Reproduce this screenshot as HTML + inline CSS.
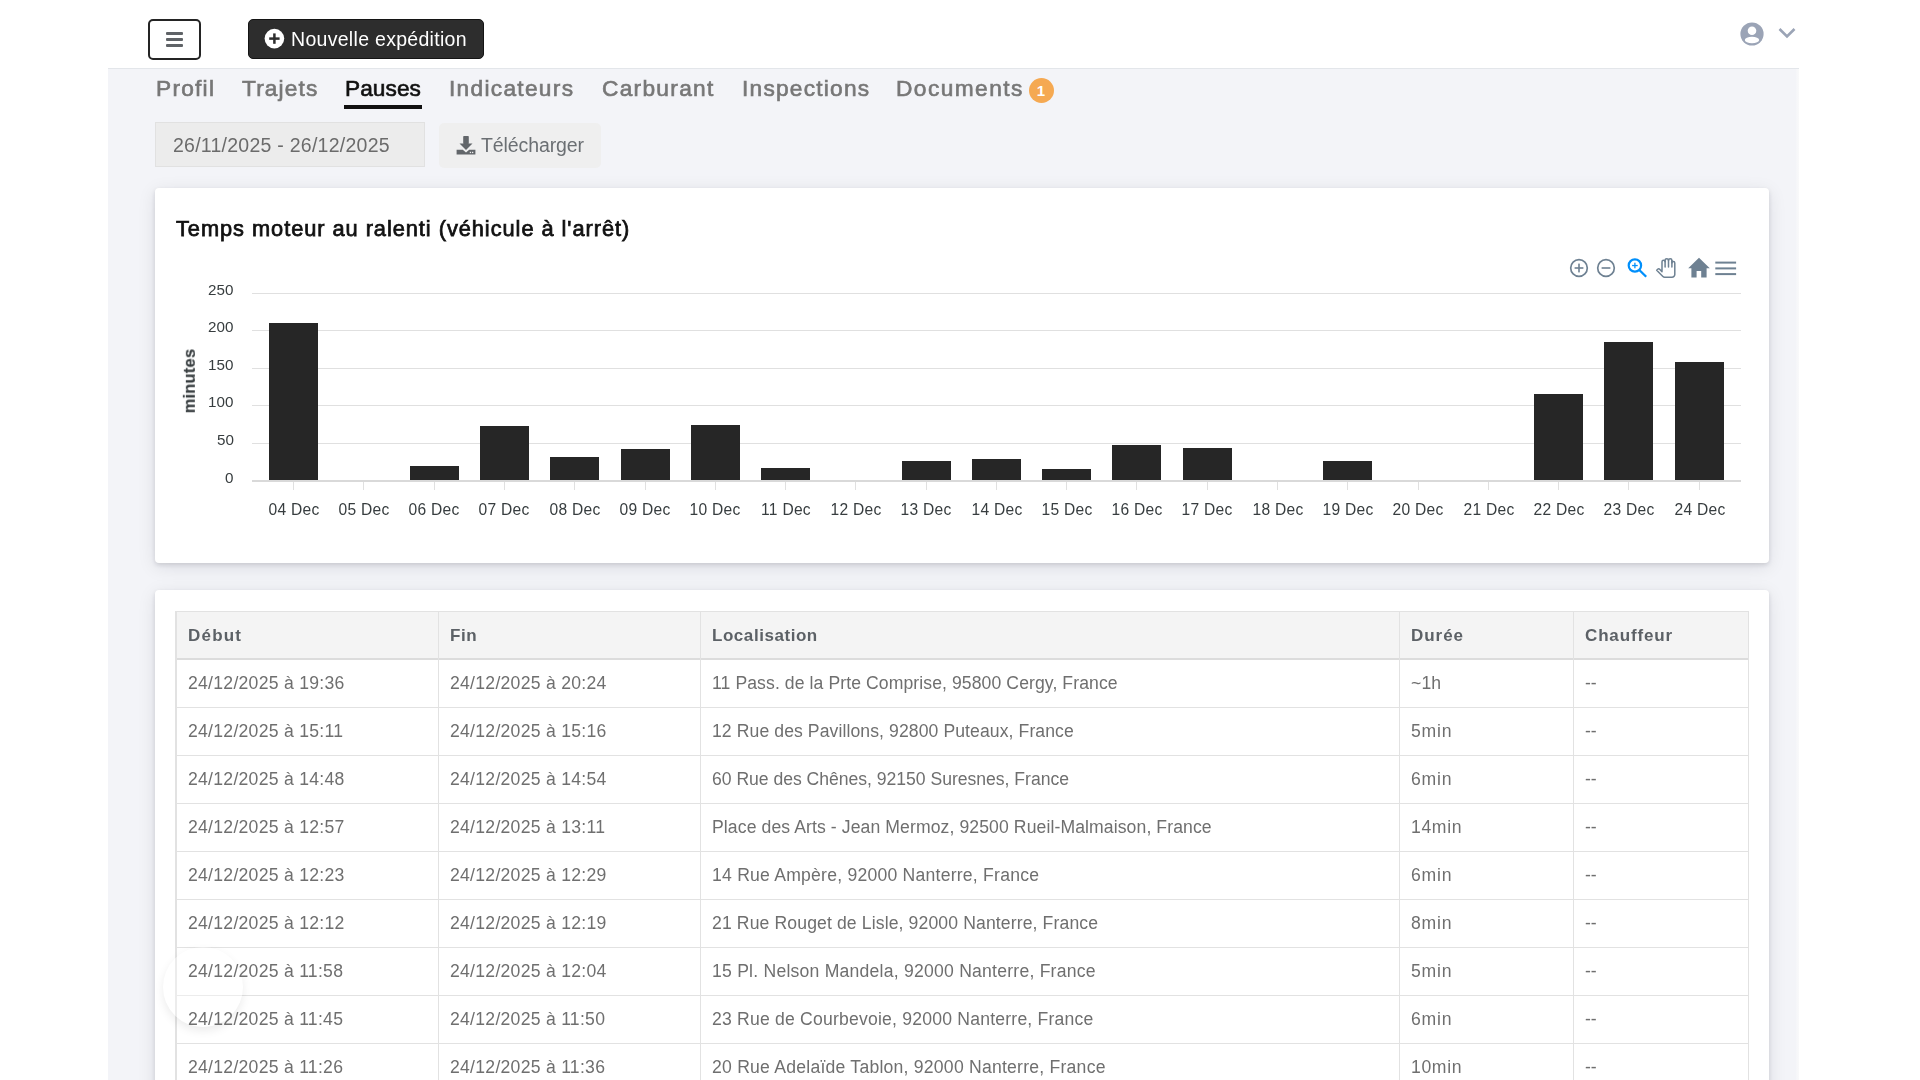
<!DOCTYPE html>
<html><head><meta charset="utf-8"><title>Pauses</title>
<style>
html,body{margin:0;padding:0;}
body{width:1920px;height:1080px;overflow:hidden;background:#fff;position:relative;font-family:'Liberation Sans', sans-serif;}
.r{position:absolute;}
.t{position:absolute;white-space:nowrap;will-change:transform;}
</style></head><body>
<div class="r" style="left:108.00px;top:68.00px;width:1688.00px;height:1012.00px;background:#f3f4f8;"></div>
<div class="r" style="left:108.00px;top:67.60px;width:1691.00px;height:1.20px;background:#e3e6ea;"></div>
<div class="r" style="left:1796.00px;top:69.00px;width:3.00px;height:1011.00px;background:linear-gradient(90deg,#f5f6f9,#f9f9fa);"></div>
<div class="r" style="left:148.00px;top:18.50px;width:53.00px;height:41.00px;border:2px solid #242424;border-radius:5px;box-sizing:border-box;background:#fff;"></div>
<div class="r" style="left:166.00px;top:32.35px;width:17.00px;height:2.50px;background:#5f6367;border-radius:1px;"></div>
<div class="r" style="left:166.00px;top:38.15px;width:17.00px;height:2.50px;background:#5f6367;border-radius:1px;"></div>
<div class="r" style="left:166.00px;top:44.05px;width:17.00px;height:2.50px;background:#5f6367;border-radius:1px;"></div>
<div class="r" style="left:248.00px;top:19.00px;width:236.00px;height:39.60px;background:#2d2d2d;border:1px solid #141414;box-sizing:border-box;border-radius:5px;"></div>
<svg class="r" style="left:264px;top:28px" width="21" height="21" viewBox="0 0 21 21"><circle cx="10.4" cy="10.6" r="9.8" fill="#fff"/><rect x="5.2" y="9.35" width="10.4" height="2.5" fill="#2d2d2d"/><rect x="9.15" y="5.4" width="2.5" height="10.4" fill="#2d2d2d"/></svg>
<div class="t" style="left:290.50px;top:30.19px;font-size:19.5px;line-height:19.5px;color:#fff;font-weight:normal;letter-spacing:0.3px;">Nouvelle expédition</div>
<svg class="r" style="left:1740px;top:21.5px" width="24" height="24" viewBox="0 0 24 24"><defs><clipPath id="uc"><circle cx="12" cy="12" r="11.6"/></clipPath></defs><circle cx="12" cy="12" r="11.6" fill="#9ba4b6"/><circle cx="12" cy="8.8" r="4.3" fill="#fff"/><ellipse cx="12" cy="18" rx="7.2" ry="3.2" fill="#fff" clip-path="url(#uc)"/></svg>
<svg class="r" style="left:1777px;top:26px" width="20" height="14" viewBox="0 0 20 14"><polyline points="2.5,3 10,10.5 17.5,3" fill="none" stroke="#9ba4b6" stroke-width="2.6"/></svg>
<div class="t" style="left:156.20px;top:77.08px;font-size:22.7px;line-height:22.7px;color:#777;font-weight:normal;letter-spacing:1.25px;-webkit-text-stroke:0.65px #777;">Profil</div>
<div class="t" style="left:241.50px;top:77.08px;font-size:22.7px;line-height:22.7px;color:#777;font-weight:normal;letter-spacing:1.13px;-webkit-text-stroke:0.65px #777;">Trajets</div>
<div class="t" style="left:345.30px;top:77.08px;font-size:22.7px;line-height:22.7px;color:#111;font-weight:normal;letter-spacing:0.05px;-webkit-text-stroke:0.65px #111;">Pauses</div>
<div class="t" style="left:448.80px;top:77.08px;font-size:22.7px;line-height:22.7px;color:#777;font-weight:normal;letter-spacing:1.3px;-webkit-text-stroke:0.65px #777;">Indicateurs</div>
<div class="t" style="left:602.10px;top:77.08px;font-size:22.7px;line-height:22.7px;color:#777;font-weight:normal;letter-spacing:1.3px;-webkit-text-stroke:0.65px #777;">Carburant</div>
<div class="t" style="left:741.70px;top:77.08px;font-size:22.7px;line-height:22.7px;color:#777;font-weight:normal;letter-spacing:1.24px;-webkit-text-stroke:0.65px #777;">Inspections</div>
<div class="t" style="left:895.80px;top:77.08px;font-size:22.7px;line-height:22.7px;color:#777;font-weight:normal;letter-spacing:1.45px;-webkit-text-stroke:0.65px #777;">Documents</div>
<div class="r" style="left:344.00px;top:104.80px;width:78.20px;height:3.90px;background:#111;"></div>
<div class="r" style="left:1028.5px;top:77.9px;width:25px;height:25px;border-radius:50%;background:#f5a952;color:#fff;font-size:15px;font-weight:bold;line-height:25px;text-align:center;">1</div>
<div class="r" style="left:155.00px;top:122.00px;width:270.00px;height:45.30px;background:#ececec;border:1px solid #e1e1e1;box-sizing:border-box;"></div>
<div class="t" style="left:173.00px;top:135.99px;font-size:19.5px;line-height:19.5px;color:#6b6b6b;font-weight:normal;letter-spacing:0.25px;">26/11/2025 - 26/12/2025</div>
<div class="r" style="left:439.40px;top:122.50px;width:161.60px;height:45.00px;background:#efefef;border-radius:5px;"></div>
<svg class="r" style="left:456px;top:136px" width="20" height="19" viewBox="0 0 20 19"><rect x="7.2" y="0" width="5.6" height="8" rx="0.8" fill="#62666a"/><polygon points="3.5,7.5 16.5,7.5 10,14" fill="#62666a"/><path d="M0.6 13.8 H6.8 L10 16.5 L13.2 13.8 H19.4 V18.4 H0.6 Z" fill="#62666a"/><rect x="13.8" y="15.8" width="1.3" height="1.3" fill="#efefef"/><rect x="16" y="15.8" width="1.3" height="1.3" fill="#efefef"/></svg>
<div class="t" style="left:480.80px;top:136.49px;font-size:19.5px;line-height:19.5px;color:#6b6f73;font-weight:normal;letter-spacing:-0.1px;">Télécharger</div>
<div class="r" style="left:155.00px;top:188.00px;width:1614.00px;height:375.00px;background:#fff;border-radius:4px;box-shadow:0 2px 4px rgba(20,22,40,0.13), 0 4px 18px rgba(20,22,40,0.10);"></div>
<div class="t" style="left:175.50px;top:217.75px;font-size:21.8px;line-height:21.8px;color:#111;font-weight:normal;letter-spacing:0.95px;-webkit-text-stroke:0.75px #111;">Temps moteur au ralenti (véhicule à l'arrêt)</div>
<div class="r" style="left:252.00px;top:292.60px;width:1489.00px;height:1.20px;background:#e0e0e0;"></div>
<div class="r" style="left:252.00px;top:330.10px;width:1489.00px;height:1.20px;background:#e0e0e0;"></div>
<div class="r" style="left:252.00px;top:367.50px;width:1489.00px;height:1.20px;background:#e0e0e0;"></div>
<div class="r" style="left:252.00px;top:404.80px;width:1489.00px;height:1.20px;background:#e0e0e0;"></div>
<div class="r" style="left:252.00px;top:442.60px;width:1489.00px;height:1.20px;background:#e0e0e0;"></div>
<div class="r" style="left:252.00px;top:480.20px;width:1489.00px;height:1.80px;background:#d9d9d9;"></div>
<div class="t" style="right:1686.50px;top:281.93px;font-size:15.2px;line-height:15.2px;color:#373d3f;font-weight:normal;letter-spacing:0px;">250</div>
<div class="t" style="right:1686.50px;top:319.43px;font-size:15.2px;line-height:15.2px;color:#373d3f;font-weight:normal;letter-spacing:0px;">200</div>
<div class="t" style="right:1686.50px;top:356.83px;font-size:15.2px;line-height:15.2px;color:#373d3f;font-weight:normal;letter-spacing:0px;">150</div>
<div class="t" style="right:1686.50px;top:394.13px;font-size:15.2px;line-height:15.2px;color:#373d3f;font-weight:normal;letter-spacing:0px;">100</div>
<div class="t" style="right:1686.50px;top:431.93px;font-size:15.2px;line-height:15.2px;color:#373d3f;font-weight:normal;letter-spacing:0px;">50</div>
<div class="t" style="right:1686.50px;top:469.83px;font-size:15.2px;line-height:15.2px;color:#373d3f;font-weight:normal;letter-spacing:0px;">0</div>
<div class="t" style="left:188.5px;top:381px;transform:translate(-50%,-50%) rotate(-90deg);font-size:16.3px;line-height:16.3px;font-weight:bold;color:#373d3f;letter-spacing:0.3px;-webkit-text-stroke:0.2px #373d3f">minutes</div>
<div class="r" style="left:293.10px;top:482.20px;width:1.00px;height:7.60px;background:#e0e0e0;"></div>
<div class="r" style="left:269.10px;top:323.20px;width:49.00px;height:157.20px;background:#262626;"></div>
<div class="t" style="left:193.60px;width:200px;text-align:center;top:502.19px;font-size:15.6px;line-height:15.6px;color:#373d3f;font-weight:normal;letter-spacing:0.25px;">04 Dec</div>
<div class="r" style="left:363.38px;top:482.20px;width:1.00px;height:7.60px;background:#e0e0e0;"></div>
<div class="t" style="left:263.89px;width:200px;text-align:center;top:502.19px;font-size:15.6px;line-height:15.6px;color:#373d3f;font-weight:normal;letter-spacing:0.25px;">05 Dec</div>
<div class="r" style="left:433.66px;top:482.20px;width:1.00px;height:7.60px;background:#e0e0e0;"></div>
<div class="r" style="left:409.66px;top:465.60px;width:49.00px;height:14.80px;background:#262626;"></div>
<div class="t" style="left:334.19px;width:200px;text-align:center;top:502.19px;font-size:15.6px;line-height:15.6px;color:#373d3f;font-weight:normal;letter-spacing:0.25px;">06 Dec</div>
<div class="r" style="left:503.94px;top:482.20px;width:1.00px;height:7.60px;background:#e0e0e0;"></div>
<div class="r" style="left:479.94px;top:425.90px;width:49.00px;height:54.50px;background:#262626;"></div>
<div class="t" style="left:404.49px;width:200px;text-align:center;top:502.19px;font-size:15.6px;line-height:15.6px;color:#373d3f;font-weight:normal;letter-spacing:0.25px;">07 Dec</div>
<div class="r" style="left:574.22px;top:482.20px;width:1.00px;height:7.60px;background:#e0e0e0;"></div>
<div class="r" style="left:550.22px;top:456.60px;width:49.00px;height:23.80px;background:#262626;"></div>
<div class="t" style="left:474.78px;width:200px;text-align:center;top:502.19px;font-size:15.6px;line-height:15.6px;color:#373d3f;font-weight:normal;letter-spacing:0.25px;">08 Dec</div>
<div class="r" style="left:644.50px;top:482.20px;width:1.00px;height:7.60px;background:#e0e0e0;"></div>
<div class="r" style="left:620.50px;top:449.10px;width:49.00px;height:31.30px;background:#262626;"></div>
<div class="t" style="left:545.08px;width:200px;text-align:center;top:502.19px;font-size:15.6px;line-height:15.6px;color:#373d3f;font-weight:normal;letter-spacing:0.25px;">09 Dec</div>
<div class="r" style="left:714.78px;top:482.20px;width:1.00px;height:7.60px;background:#e0e0e0;"></div>
<div class="r" style="left:690.78px;top:425.00px;width:49.00px;height:55.40px;background:#262626;"></div>
<div class="t" style="left:615.37px;width:200px;text-align:center;top:502.19px;font-size:15.6px;line-height:15.6px;color:#373d3f;font-weight:normal;letter-spacing:0.25px;">10 Dec</div>
<div class="r" style="left:785.06px;top:482.20px;width:1.00px;height:7.60px;background:#e0e0e0;"></div>
<div class="r" style="left:761.06px;top:468.40px;width:49.00px;height:12.00px;background:#262626;"></div>
<div class="t" style="left:685.67px;width:200px;text-align:center;top:502.19px;font-size:15.6px;line-height:15.6px;color:#373d3f;font-weight:normal;letter-spacing:0.25px;">11 Dec</div>
<div class="r" style="left:855.34px;top:482.20px;width:1.00px;height:7.60px;background:#e0e0e0;"></div>
<div class="t" style="left:755.96px;width:200px;text-align:center;top:502.19px;font-size:15.6px;line-height:15.6px;color:#373d3f;font-weight:normal;letter-spacing:0.25px;">12 Dec</div>
<div class="r" style="left:925.62px;top:482.20px;width:1.00px;height:7.60px;background:#e0e0e0;"></div>
<div class="r" style="left:901.62px;top:461.25px;width:49.00px;height:19.15px;background:#262626;"></div>
<div class="t" style="left:826.25px;width:200px;text-align:center;top:502.19px;font-size:15.6px;line-height:15.6px;color:#373d3f;font-weight:normal;letter-spacing:0.25px;">13 Dec</div>
<div class="r" style="left:995.90px;top:482.20px;width:1.00px;height:7.60px;background:#e0e0e0;"></div>
<div class="r" style="left:971.90px;top:458.75px;width:49.00px;height:21.65px;background:#262626;"></div>
<div class="t" style="left:896.55px;width:200px;text-align:center;top:502.19px;font-size:15.6px;line-height:15.6px;color:#373d3f;font-weight:normal;letter-spacing:0.25px;">14 Dec</div>
<div class="r" style="left:1066.18px;top:482.20px;width:1.00px;height:7.60px;background:#e0e0e0;"></div>
<div class="r" style="left:1042.18px;top:469.40px;width:49.00px;height:11.00px;background:#262626;"></div>
<div class="t" style="left:966.85px;width:200px;text-align:center;top:502.19px;font-size:15.6px;line-height:15.6px;color:#373d3f;font-weight:normal;letter-spacing:0.25px;">15 Dec</div>
<div class="r" style="left:1136.46px;top:482.20px;width:1.00px;height:7.60px;background:#e0e0e0;"></div>
<div class="r" style="left:1112.46px;top:445.30px;width:49.00px;height:35.10px;background:#262626;"></div>
<div class="t" style="left:1037.14px;width:200px;text-align:center;top:502.19px;font-size:15.6px;line-height:15.6px;color:#373d3f;font-weight:normal;letter-spacing:0.25px;">16 Dec</div>
<div class="r" style="left:1206.74px;top:482.20px;width:1.00px;height:7.60px;background:#e0e0e0;"></div>
<div class="r" style="left:1182.74px;top:447.50px;width:49.00px;height:32.90px;background:#262626;"></div>
<div class="t" style="left:1107.43px;width:200px;text-align:center;top:502.19px;font-size:15.6px;line-height:15.6px;color:#373d3f;font-weight:normal;letter-spacing:0.25px;">17 Dec</div>
<div class="r" style="left:1277.02px;top:482.20px;width:1.00px;height:7.60px;background:#e0e0e0;"></div>
<div class="t" style="left:1177.73px;width:200px;text-align:center;top:502.19px;font-size:15.6px;line-height:15.6px;color:#373d3f;font-weight:normal;letter-spacing:0.25px;">18 Dec</div>
<div class="r" style="left:1347.30px;top:482.20px;width:1.00px;height:7.60px;background:#e0e0e0;"></div>
<div class="r" style="left:1323.30px;top:461.25px;width:49.00px;height:19.15px;background:#262626;"></div>
<div class="t" style="left:1248.03px;width:200px;text-align:center;top:502.19px;font-size:15.6px;line-height:15.6px;color:#373d3f;font-weight:normal;letter-spacing:0.25px;">19 Dec</div>
<div class="r" style="left:1417.58px;top:482.20px;width:1.00px;height:7.60px;background:#e0e0e0;"></div>
<div class="t" style="left:1318.32px;width:200px;text-align:center;top:502.19px;font-size:15.6px;line-height:15.6px;color:#373d3f;font-weight:normal;letter-spacing:0.25px;">20 Dec</div>
<div class="r" style="left:1487.86px;top:482.20px;width:1.00px;height:7.60px;background:#e0e0e0;"></div>
<div class="t" style="left:1388.62px;width:200px;text-align:center;top:502.19px;font-size:15.6px;line-height:15.6px;color:#373d3f;font-weight:normal;letter-spacing:0.25px;">21 Dec</div>
<div class="r" style="left:1558.14px;top:482.20px;width:1.00px;height:7.60px;background:#e0e0e0;"></div>
<div class="r" style="left:1534.14px;top:394.00px;width:49.00px;height:86.40px;background:#262626;"></div>
<div class="t" style="left:1458.91px;width:200px;text-align:center;top:502.19px;font-size:15.6px;line-height:15.6px;color:#373d3f;font-weight:normal;letter-spacing:0.25px;">22 Dec</div>
<div class="r" style="left:1628.42px;top:482.20px;width:1.00px;height:7.60px;background:#e0e0e0;"></div>
<div class="r" style="left:1604.42px;top:342.10px;width:49.00px;height:138.30px;background:#262626;"></div>
<div class="t" style="left:1529.21px;width:200px;text-align:center;top:502.19px;font-size:15.6px;line-height:15.6px;color:#373d3f;font-weight:normal;letter-spacing:0.25px;">23 Dec</div>
<div class="r" style="left:1698.70px;top:482.20px;width:1.00px;height:7.60px;background:#e0e0e0;"></div>
<div class="r" style="left:1674.70px;top:361.50px;width:49.00px;height:118.90px;background:#262626;"></div>
<div class="t" style="left:1599.50px;width:200px;text-align:center;top:502.19px;font-size:15.6px;line-height:15.6px;color:#373d3f;font-weight:normal;letter-spacing:0.25px;">24 Dec</div>
<svg class="r" style="left:1569px;top:257.8px" width="20" height="20" viewBox="0 0 20 20"><circle cx="10" cy="10" r="8.3" fill="none" stroke="#6e8192" stroke-width="1.7"/><rect x="5.6" y="9.2" width="8.8" height="1.6" fill="#6e8192"/><rect x="9.2" y="5.6" width="1.6" height="8.8" fill="#6e8192"/></svg>
<svg class="r" style="left:1596.4px;top:257.8px" width="20" height="20" viewBox="0 0 20 20"><circle cx="10" cy="10" r="8.3" fill="none" stroke="#6e8192" stroke-width="1.7"/><rect x="5.6" y="9.2" width="8.8" height="1.6" fill="#6e8192"/></svg>
<svg class="r" style="left:1625px;top:256px" width="24" height="24" viewBox="0 0 24 24"><circle cx="9.9" cy="9.5" r="6.2" fill="none" stroke="#008ffb" stroke-width="2.2"/><line x1="14.3" y1="14" x2="21.2" y2="20.8" stroke="#008ffb" stroke-width="2.3"/><rect x="7.1" y="8.9" width="5.6" height="1.3" fill="#008ffb"/><rect x="9.25" y="6.7" width="1.3" height="5.6" fill="#008ffb"/></svg>
<svg class="r" style="left:1654px;top:256px" width="24" height="24" viewBox="0 0 24 24"><path d="M8 15.6 V5.7 A1.55 1.55 0 0 1 11.1 5.7 V4.35 A1.7 1.7 0 0 1 14.5 4.35 V4.45 A1.7 1.7 0 0 1 17.9 4.45 V6.9 A1.45 1.45 0 0 1 20.8 6.9 V18.4 A2.8 2.8 0 0 1 18 21.2 H10.6 A2.4 2.4 0 0 1 8.9 20.5 L2.7 14.3 L3.7 13.3 A1.4 1.4 0 0 1 5.6 13.2 Z" fill="none" stroke="#6e8192" stroke-width="1.5" stroke-linejoin="round"/><line x1="11.1" y1="5" x2="11.1" y2="11" stroke="#6e8192" stroke-width="1.5" stroke-linecap="round"/><line x1="14.5" y1="4" x2="14.5" y2="11" stroke="#6e8192" stroke-width="1.5" stroke-linecap="round"/><line x1="17.9" y1="4.5" x2="17.9" y2="11" stroke="#6e8192" stroke-width="1.5" stroke-linecap="round"/></svg>
<svg class="r" style="left:1686.5px;top:256px" width="24" height="24" viewBox="0 0 24 24"><path d="M9.6 21.5 v-6.5 h4.6 v6.5 h5.4 v-9.2 h3.2 L12 1.8 L1.2 12.3 h3.2 v9.2 z" fill="#6e8192"/></svg>
<svg class="r" style="left:1715px;top:256px" width="22" height="24" viewBox="0 0 22 24"><rect x="0.3" y="5.6" width="20.8" height="2" fill="#6e8192"/><rect x="0.3" y="11.4" width="20.8" height="2" fill="#6e8192"/><rect x="0.3" y="17.1" width="20.8" height="2" fill="#6e8192"/></svg>
<div class="r" style="left:155.00px;top:590.00px;width:1614.00px;height:510.00px;background:#fff;border-radius:4px;box-shadow:0 2px 4px rgba(20,22,40,0.13), 0 4px 18px rgba(20,22,40,0.10);"></div>
<div class="r" style="left:176.00px;top:611.25px;width:1572.20px;height:48.15px;background:#f4f4f4;"></div>
<div class="r" style="left:176.00px;top:610.50px;width:1573.00px;height:1.30px;background:#e2e2e2;"></div>
<div class="r" style="left:176.00px;top:658.40px;width:1573.00px;height:2.00px;background:#dcdcdc;"></div>
<div class="r" style="left:176.00px;top:706.75px;width:1573.00px;height:1.30px;background:#e2e2e2;"></div>
<div class="r" style="left:176.00px;top:754.75px;width:1573.00px;height:1.30px;background:#e2e2e2;"></div>
<div class="r" style="left:176.00px;top:802.75px;width:1573.00px;height:1.30px;background:#e2e2e2;"></div>
<div class="r" style="left:176.00px;top:850.75px;width:1573.00px;height:1.30px;background:#e2e2e2;"></div>
<div class="r" style="left:176.00px;top:898.75px;width:1573.00px;height:1.30px;background:#e2e2e2;"></div>
<div class="r" style="left:176.00px;top:946.75px;width:1573.00px;height:1.30px;background:#e2e2e2;"></div>
<div class="r" style="left:176.00px;top:994.75px;width:1573.00px;height:1.30px;background:#e2e2e2;"></div>
<div class="r" style="left:176.00px;top:1042.75px;width:1573.00px;height:1.30px;background:#e2e2e2;"></div>
<div class="r" style="left:176.00px;top:1090.75px;width:1573.00px;height:1.30px;background:#e2e2e2;"></div>
<div class="r" style="left:175.35px;top:611.00px;width:1.30px;height:469.00px;background:#e2e2e2;"></div>
<div class="r" style="left:437.65px;top:611.00px;width:1.30px;height:469.00px;background:#e2e2e2;"></div>
<div class="r" style="left:699.65px;top:611.00px;width:1.30px;height:469.00px;background:#e2e2e2;"></div>
<div class="r" style="left:1398.55px;top:611.00px;width:1.30px;height:469.00px;background:#e2e2e2;"></div>
<div class="r" style="left:1572.75px;top:611.00px;width:1.30px;height:469.00px;background:#e2e2e2;"></div>
<div class="r" style="left:1747.55px;top:611.00px;width:1.30px;height:469.00px;background:#e2e2e2;"></div>
<div class="r" style="left:162.5px;top:946.5px;width:80px;height:80px;border-radius:50%;background:rgba(255,255,255,0.35);box-shadow:0 4px 10px rgba(0,0,0,0.08);"></div>
<div class="t" style="left:187.60px;top:627.01px;font-size:17px;line-height:17px;color:#5c6166;font-weight:bold;letter-spacing:1.2px;">Début</div>
<div class="t" style="left:449.90px;top:627.01px;font-size:17px;line-height:17px;color:#5c6166;font-weight:bold;letter-spacing:0.6px;">Fin</div>
<div class="t" style="left:711.90px;top:627.01px;font-size:17px;line-height:17px;color:#5c6166;font-weight:bold;letter-spacing:0.55px;">Localisation</div>
<div class="t" style="left:1410.80px;top:627.01px;font-size:17px;line-height:17px;color:#5c6166;font-weight:bold;letter-spacing:0.95px;">Durée</div>
<div class="t" style="left:1585.00px;top:627.01px;font-size:17px;line-height:17px;color:#5c6166;font-weight:bold;letter-spacing:0.85px;">Chauffeur</div>
<div class="t" style="left:187.50px;top:675.00px;font-size:17.6px;line-height:17.6px;color:#6f6f6f;font-weight:normal;letter-spacing:0.27px;">24/12/2025 à 19:36</div>
<div class="t" style="left:449.80px;top:675.00px;font-size:17.6px;line-height:17.6px;color:#6f6f6f;font-weight:normal;letter-spacing:0.27px;">24/12/2025 à 20:24</div>
<div class="t" style="left:711.80px;top:675.00px;font-size:17.6px;line-height:17.6px;color:#6f6f6f;font-weight:normal;letter-spacing:0.09px;">11 Pass. de la Prte Comprise, 95800 Cergy, France</div>
<div class="t" style="left:1410.70px;top:675.00px;font-size:17.6px;line-height:17.6px;color:#6f6f6f;font-weight:normal;letter-spacing:0.15px;">~1h</div>
<div class="t" style="left:1584.90px;top:675.00px;font-size:17.6px;line-height:17.6px;color:#6f6f6f;font-weight:normal;letter-spacing:0px;">--</div>
<div class="t" style="left:187.50px;top:723.00px;font-size:17.6px;line-height:17.6px;color:#6f6f6f;font-weight:normal;letter-spacing:0.27px;">24/12/2025 à 15:11</div>
<div class="t" style="left:449.80px;top:723.00px;font-size:17.6px;line-height:17.6px;color:#6f6f6f;font-weight:normal;letter-spacing:0.27px;">24/12/2025 à 15:16</div>
<div class="t" style="left:711.80px;top:723.00px;font-size:17.6px;line-height:17.6px;color:#6f6f6f;font-weight:normal;letter-spacing:0.09px;">12 Rue des Pavillons, 92800 Puteaux, France</div>
<div class="t" style="left:1410.70px;top:723.00px;font-size:17.6px;line-height:17.6px;color:#6f6f6f;font-weight:normal;letter-spacing:0.817px;">5min</div>
<div class="t" style="left:1584.90px;top:723.00px;font-size:17.6px;line-height:17.6px;color:#6f6f6f;font-weight:normal;letter-spacing:0px;">--</div>
<div class="t" style="left:187.50px;top:771.00px;font-size:17.6px;line-height:17.6px;color:#6f6f6f;font-weight:normal;letter-spacing:0.27px;">24/12/2025 à 14:48</div>
<div class="t" style="left:449.80px;top:771.00px;font-size:17.6px;line-height:17.6px;color:#6f6f6f;font-weight:normal;letter-spacing:0.27px;">24/12/2025 à 14:54</div>
<div class="t" style="left:711.80px;top:771.00px;font-size:17.6px;line-height:17.6px;color:#6f6f6f;font-weight:normal;letter-spacing:-0.025px;">60 Rue des Chênes, 92150 Suresnes, France</div>
<div class="t" style="left:1410.70px;top:771.00px;font-size:17.6px;line-height:17.6px;color:#6f6f6f;font-weight:normal;letter-spacing:0.817px;">6min</div>
<div class="t" style="left:1584.90px;top:771.00px;font-size:17.6px;line-height:17.6px;color:#6f6f6f;font-weight:normal;letter-spacing:0px;">--</div>
<div class="t" style="left:187.50px;top:819.00px;font-size:17.6px;line-height:17.6px;color:#6f6f6f;font-weight:normal;letter-spacing:0.27px;">24/12/2025 à 12:57</div>
<div class="t" style="left:449.80px;top:819.00px;font-size:17.6px;line-height:17.6px;color:#6f6f6f;font-weight:normal;letter-spacing:0.27px;">24/12/2025 à 13:11</div>
<div class="t" style="left:711.80px;top:819.00px;font-size:17.6px;line-height:17.6px;color:#6f6f6f;font-weight:normal;letter-spacing:0.1px;">Place des Arts - Jean Mermoz, 92500 Rueil-Malmaison, France</div>
<div class="t" style="left:1410.70px;top:819.00px;font-size:17.6px;line-height:17.6px;color:#6f6f6f;font-weight:normal;letter-spacing:0.65px;">14min</div>
<div class="t" style="left:1584.90px;top:819.00px;font-size:17.6px;line-height:17.6px;color:#6f6f6f;font-weight:normal;letter-spacing:0px;">--</div>
<div class="t" style="left:187.50px;top:867.00px;font-size:17.6px;line-height:17.6px;color:#6f6f6f;font-weight:normal;letter-spacing:0.27px;">24/12/2025 à 12:23</div>
<div class="t" style="left:449.80px;top:867.00px;font-size:17.6px;line-height:17.6px;color:#6f6f6f;font-weight:normal;letter-spacing:0.27px;">24/12/2025 à 12:29</div>
<div class="t" style="left:711.80px;top:867.00px;font-size:17.6px;line-height:17.6px;color:#6f6f6f;font-weight:normal;letter-spacing:0.226px;">14 Rue Ampère, 92000 Nanterre, France</div>
<div class="t" style="left:1410.70px;top:867.00px;font-size:17.6px;line-height:17.6px;color:#6f6f6f;font-weight:normal;letter-spacing:0.817px;">6min</div>
<div class="t" style="left:1584.90px;top:867.00px;font-size:17.6px;line-height:17.6px;color:#6f6f6f;font-weight:normal;letter-spacing:0px;">--</div>
<div class="t" style="left:187.50px;top:915.00px;font-size:17.6px;line-height:17.6px;color:#6f6f6f;font-weight:normal;letter-spacing:0.27px;">24/12/2025 à 12:12</div>
<div class="t" style="left:449.80px;top:915.00px;font-size:17.6px;line-height:17.6px;color:#6f6f6f;font-weight:normal;letter-spacing:0.27px;">24/12/2025 à 12:19</div>
<div class="t" style="left:711.80px;top:915.00px;font-size:17.6px;line-height:17.6px;color:#6f6f6f;font-weight:normal;letter-spacing:0.123px;">21 Rue Rouget de Lisle, 92000 Nanterre, France</div>
<div class="t" style="left:1410.70px;top:915.00px;font-size:17.6px;line-height:17.6px;color:#6f6f6f;font-weight:normal;letter-spacing:0.817px;">8min</div>
<div class="t" style="left:1584.90px;top:915.00px;font-size:17.6px;line-height:17.6px;color:#6f6f6f;font-weight:normal;letter-spacing:0px;">--</div>
<div class="t" style="left:187.50px;top:963.00px;font-size:17.6px;line-height:17.6px;color:#6f6f6f;font-weight:normal;letter-spacing:0.27px;">24/12/2025 à 11:58</div>
<div class="t" style="left:449.80px;top:963.00px;font-size:17.6px;line-height:17.6px;color:#6f6f6f;font-weight:normal;letter-spacing:0.27px;">24/12/2025 à 12:04</div>
<div class="t" style="left:711.80px;top:963.00px;font-size:17.6px;line-height:17.6px;color:#6f6f6f;font-weight:normal;letter-spacing:0.226px;">15 Pl. Nelson Mandela, 92000 Nanterre, France</div>
<div class="t" style="left:1410.70px;top:963.00px;font-size:17.6px;line-height:17.6px;color:#6f6f6f;font-weight:normal;letter-spacing:0.817px;">5min</div>
<div class="t" style="left:1584.90px;top:963.00px;font-size:17.6px;line-height:17.6px;color:#6f6f6f;font-weight:normal;letter-spacing:0px;">--</div>
<div class="t" style="left:187.50px;top:1011.00px;font-size:17.6px;line-height:17.6px;color:#6f6f6f;font-weight:normal;letter-spacing:0.27px;">24/12/2025 à 11:45</div>
<div class="t" style="left:449.80px;top:1011.00px;font-size:17.6px;line-height:17.6px;color:#6f6f6f;font-weight:normal;letter-spacing:0.27px;">24/12/2025 à 11:50</div>
<div class="t" style="left:711.80px;top:1011.00px;font-size:17.6px;line-height:17.6px;color:#6f6f6f;font-weight:normal;letter-spacing:0.202px;">23 Rue de Courbevoie, 92000 Nanterre, France</div>
<div class="t" style="left:1410.70px;top:1011.00px;font-size:17.6px;line-height:17.6px;color:#6f6f6f;font-weight:normal;letter-spacing:0.817px;">6min</div>
<div class="t" style="left:1584.90px;top:1011.00px;font-size:17.6px;line-height:17.6px;color:#6f6f6f;font-weight:normal;letter-spacing:0px;">--</div>
<div class="t" style="left:187.50px;top:1059.00px;font-size:17.6px;line-height:17.6px;color:#6f6f6f;font-weight:normal;letter-spacing:0.27px;">24/12/2025 à 11:26</div>
<div class="t" style="left:449.80px;top:1059.00px;font-size:17.6px;line-height:17.6px;color:#6f6f6f;font-weight:normal;letter-spacing:0.27px;">24/12/2025 à 11:36</div>
<div class="t" style="left:711.80px;top:1059.00px;font-size:17.6px;line-height:17.6px;color:#6f6f6f;font-weight:normal;letter-spacing:0.23px;">20 Rue Adelaïde Tablon, 92000 Nanterre, France</div>
<div class="t" style="left:1410.70px;top:1059.00px;font-size:17.6px;line-height:17.6px;color:#6f6f6f;font-weight:normal;letter-spacing:0.65px;">10min</div>
<div class="t" style="left:1584.90px;top:1059.00px;font-size:17.6px;line-height:17.6px;color:#6f6f6f;font-weight:normal;letter-spacing:0px;">--</div>
</body></html>
